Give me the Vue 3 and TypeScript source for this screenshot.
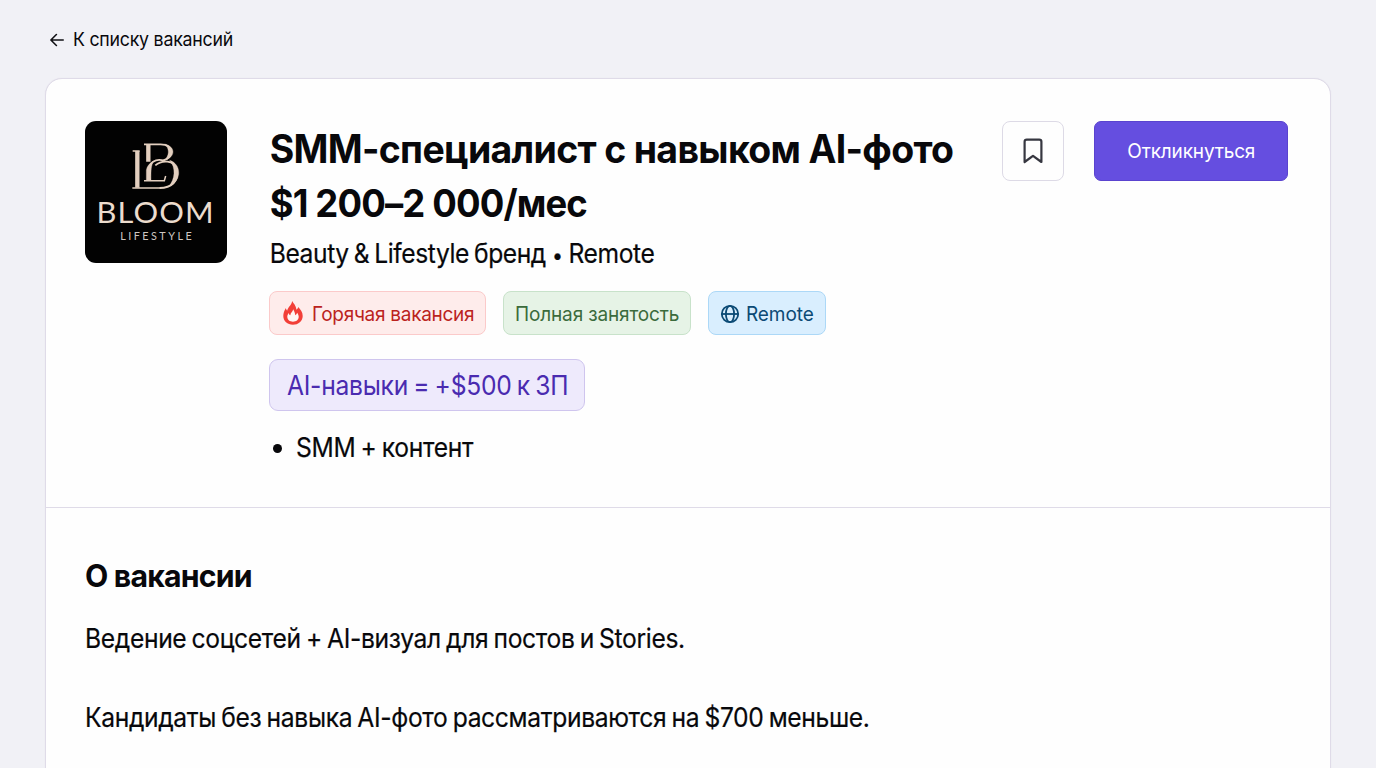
<script setup lang="ts">
interface Tag {
  label: string
  kind: 'hot' | 'full' | 'remote'
}

const tags: Tag[] = [
  { label: 'Горячая вакансия', kind: 'hot' },
  { label: 'Полная занятость', kind: 'full' },
  { label: 'Remote', kind: 'remote' },
]

const skills: string[] = ['SMM + контент']

const description: string[] = [
  'Ведение соцсетей + AI-визуал для постов и Stories.',
  'Кандидаты без навыка AI-фото рассматриваются на $700 меньше.',
]
</script>

<template>
  <div class="page">
    <a class="back">
      <svg class="back-icon" viewBox="0 0 14 14" fill="none">
        <path d="M13.2 7H1M6.4 1.5L0.9 7l5.5 5.5" />
      </svg>
      <span>К списку вакансий</span>
    </a>

    <main class="card">
      <header class="head">
        <svg class="logo" viewBox="0 0 142 142">
          <g transform="translate(40 14) scale(.33333)" fill="none" stroke="#e3cfbf">
            <!-- outer stem with its foot -->
            <path d="M37 48V158" stroke-width="13" />
            <path d="M23 48H44M22 159H106" stroke-width="4.5" />
            <!-- lower bowl -->
            <path d="M91 91C108 76 148 72 156 105C162 139 139 159 104 159" stroke-width="5.5" />
            <path d="M134 76C168 86 174 136 130 156C151 133 153 98 134 76Z" fill="#e3cfbf" stroke-width="1" />
            <!-- upper bowl and inner stem -->
            <path d="M57 28H107C147 28 150 68 113 77" stroke-width="5" />
            <path d="M119 27C153 35 152 67 118 76C134 61 134 41 119 27Z" fill="#e3cfbf" stroke-width="1" />
            <path d="M70 28V80" stroke-width="13" />
            <path d="M119 78C92 68 70 83 70 111V136" stroke-width="5" />
            <path d="M64 136V105C66 93 74 84 86 78C78 93 78 103 78 136Z" fill="#e3cfbf" stroke-width="1" />
            <path d="M57 137H118L122 123" stroke-width="4.5" />
          </g>
          <text class="logo-name" x="11.6" y="101.6" textLength="118" lengthAdjust="spacingAndGlyphs">BLOOM</text>
          <text class="logo-sub" x="35.2" y="118.9" textLength="71.5">LIFESTYLE</text>
        </svg>

        <div class="info">
          <h1 class="title">SMM-специалист с навыком AI-фото</h1>
          <div class="salary">$1 200–2 000/мес</div>
          <div class="company">Beauty &amp; Lifestyle бренд <span class="dot">•</span> Remote</div>

          <div class="tags">
            <span v-for="tag in tags" :key="tag.kind" class="tag" :class="tag.kind">
              <svg v-if="tag.kind === 'hot'" class="flame" viewBox="0 0 20 24">
                <path
                  d="M9.1 0C10.3 2.1 13.1 4.6 13.5 8.7C14.5 8.1 15 7.2 15.2 6.1C17.6 8.5 19.7 11.4 19.7 15C19.7 20 15.4 23.8 9.9 23.8C4.4 23.8 .3 20 .3 15.1C.3 12.2 1.2 9.4 2.9 6.9C3.1 8.2 3.5 9 4.3 9.6C4.8 6.1 8.8 4.1 9.1 0Z"
                  fill="#f23f38"
                />
                <path
                  d="M10.2 8.2C11.2 10.3 12 11.6 12.2 14.2C13.1 13.8 13.9 12.9 14.1 11.8C15.2 13.3 15.8 14.6 15.7 16.1C15.5 19 13.2 20.8 10 20.8C6.8 20.8 4.5 19 4.3 16.1C4.2 14.6 4.8 13.3 5.7 12C5.9 13.2 6.5 13.9 7.3 14.2C7.5 11.6 9.8 10.7 10.2 8.2Z"
                  fill="#fff6f4"
                />
              </svg>
              <svg v-if="tag.kind === 'remote'" class="globe" viewBox="0 0 20 20" fill="none">
                <circle cx="10" cy="10" r="8.2" />
                <ellipse cx="10" cy="10" rx="4.1" ry="8.2" />
                <path d="M1.8 10H18.2" />
              </svg>
              <span>{{ tag.label }}</span>
            </span>
          </div>

          <div class="bonus"><span>AI-навыки = +$500 к ЗП</span></div>

          <ul class="skills">
            <li v-for="skill in skills" :key="skill"><span>{{ skill }}</span></li>
          </ul>
        </div>

        <div class="actions">
          <button class="save" type="button" aria-label="Сохранить">
            <svg viewBox="0 0 20 26" fill="none">
              <path d="M1.6 24V3.8Q1.6 1.6 3.8 1.6H16.2Q18.4 1.6 18.4 3.8V24L10 17.8Z" />
            </svg>
          </button>
          <button class="apply" type="button"><span>Откликнуться</span></button>
        </div>
      </header>

      <section class="about">
        <h2>О вакансии</h2>
        <p v-for="line in description" :key="line">{{ line }}</p>
      </section>
    </main>
  </div>
</template>

<style>
body {
  margin: 0;
  background: #f1f1f6;
  overflow: hidden;
}
</style>

<style scoped>
.page {
  box-sizing: border-box;
  height: 768px;
  overflow: hidden;
  padding: 0 45px;
  background: #f1f1f6;
  color: #08080b;
  font-family: Inter, 'Liberation Sans', sans-serif;
}

.back {
  display: flex;
  align-items: center;
  gap: 9px;
  height: 78px;
  padding-left: 5px;
  font-size: 18.5px;
  letter-spacing: -0.25px;
}

.back span {
  transform: scaleX(0.96);
  transform-origin: 0 50%;
}

.back-icon {
  width: 14px;
  height: 14px;
  margin-top: 1px;
  stroke: #101014;
  stroke-width: 1.6;
  stroke-linecap: round;
  stroke-linejoin: round;
}

.card {
  box-sizing: border-box;
  height: 760px;
  border: 1px solid #dfdbe8;
  border-radius: 17px;
  background: #fefefe;
  box-shadow: 0 0 1px #dfdbe8;
}

.head {
  display: flex;
  align-items: flex-start;
  height: 429px;
  box-sizing: border-box;
  padding: 42px 42px 0 39px;
  border-bottom: 1px solid #dfdbe8;
}

.logo {
  flex: none;
  width: 142px;
  height: 142px;
  border-radius: 11px;
  background: #020202;
}

.logo-name {
  font-family: 'Lato', sans-serif;
  font-size: 29px;
  letter-spacing: 1px;
  fill: #ecdccd;
}

.logo-sub {
  font-family: 'Lato', sans-serif;
  font-size: 10.8px;
  fill: #cdc7c1;
}

.info {
  flex: 1;
  min-width: 0;
  margin-left: 42px;
}

.title,
.salary {
  margin: 0;
  padding-left: 0.7px;
  font-weight: 700;
  white-space: nowrap;
  transform: scaleX(0.96);
  transform-origin: 0 50%;
}

.title {
  line-height: 55px;
  font-size: 39px;
  letter-spacing: -0.7px;
}

.salary {
  line-height: 54px;
  font-size: 38px;
  letter-spacing: -0.9px;
}

.company {
  padding-left: 0.8px;
  line-height: 47px;
  font-size: 26.5px;
  letter-spacing: -0.47px;
  word-spacing: -1.5px;
  white-space: nowrap;
  -webkit-text-stroke: 0.2px;
  transform: scaleX(0.93);
  transform-origin: 0 50%;
}

.dot {
  margin: 0 1px;
  font-size: 21px;
  line-height: 1;
}

.tags {
  display: flex;
  gap: 17px;
  margin-top: 14px;
}

.tag {
  display: flex;
  align-items: center;
  box-sizing: border-box;
  height: 44px;
  padding-top: 1px;
  border: 1px solid;
  border-radius: 8px;
  font-size: 20px;
  white-space: nowrap;
}

.tag span {
  transform: scaleX(0.95);
  transform-origin: 0 50%;
}

.hot {
  width: 217px;
  padding-left: 12px;
  border-color: #fbcaca;
  background: #feeceb;
  color: #bb231d;
  letter-spacing: -0.3px;
}

.full {
  width: 188px;
  padding-left: 11px;
  border-color: #c8e2ca;
  background: #e6f3e6;
  color: #3b6b3c;
  letter-spacing: -0.15px;
}

.remote {
  width: 118px;
  padding-left: 11px;
  border-color: #acd8f7;
  background: #d9eefe;
  color: #0b4a75;
  letter-spacing: -0.08px;
}

.flame {
  flex: none;
  width: 20px;
  height: 24px;
  margin: 0 9px 2px 1px;
}

.globe {
  flex: none;
  width: 20px;
  height: 20px;
  margin-right: 6px;
  stroke: #0b4a75;
  stroke-width: 1.8;
}

.bonus {
  display: flex;
  align-items: center;
  box-sizing: border-box;
  width: 316px;
  height: 52px;
  margin-top: 24px;
  padding-left: 17px;
  border: 1px solid #cfc5ee;
  border-radius: 9px;
  background: #eeeafc;
  color: #4a2bb0;
  font-size: 26.5px;
  letter-spacing: -0.28px;
  word-spacing: -1.5px;
  white-space: nowrap;
}

.bonus span,
.skills span {
  display: inline-block;
  transform: scaleX(0.93);
  transform-origin: 0 50%;
}

.skills {
  margin: 16px 0 0;
  padding: 0;
  list-style: none;
}

.skills li {
  display: flex;
  align-items: center;
  gap: 13.5px;
  padding-left: 4px;
  line-height: 40px;
  font-size: 26.5px;
  letter-spacing: -0.35px;
  word-spacing: -1.5px;
  white-space: nowrap;
  -webkit-text-stroke: 0.2px;
}

.skills li::before {
  content: '';
  width: 9px;
  height: 9px;
  margin-top: 2px;
  border-radius: 50%;
  background: #08080b;
}

.actions {
  display: flex;
  gap: 30.5px;
}

.save {
  display: flex;
  align-items: center;
  justify-content: center;
  box-sizing: border-box;
  width: 61.5px;
  height: 60px;
  padding: 0;
  border: 1px solid #dddae6;
  border-radius: 8px;
  background: #fefefe;
}

.save svg {
  width: 20px;
  height: 26px;
  stroke: #363740;
  stroke-width: 2.2;
  stroke-linejoin: round;
}

.apply {
  width: 194px;
  height: 60px;
  padding: 0;
  border: 1px solid #5a43cf;
  border-radius: 7px;
  background: #654ee0;
  color: #fff;
  font-family: inherit;
  font-size: 20px;
  letter-spacing: -0.17px;
}

.apply span {
  display: inline-block;
  transform: scaleX(0.95);
}

.about {
  padding: 48px 39px 0;
}

.about h2 {
  margin: 0 0 22px;
  line-height: 40px;
  font-size: 31.5px;
  font-weight: 700;
  letter-spacing: -0.84px;
  transform: scaleX(0.96);
  transform-origin: 0 50%;
}

.about p {
  margin: 0 0 39px;
  line-height: 40px;
  font-size: 26.5px;
  letter-spacing: -0.38px;
  word-spacing: -1.5px;
  white-space: nowrap;
  -webkit-text-stroke: 0.2px;
  transform: scaleX(0.93);
  transform-origin: 0 50%;
}
</style>
